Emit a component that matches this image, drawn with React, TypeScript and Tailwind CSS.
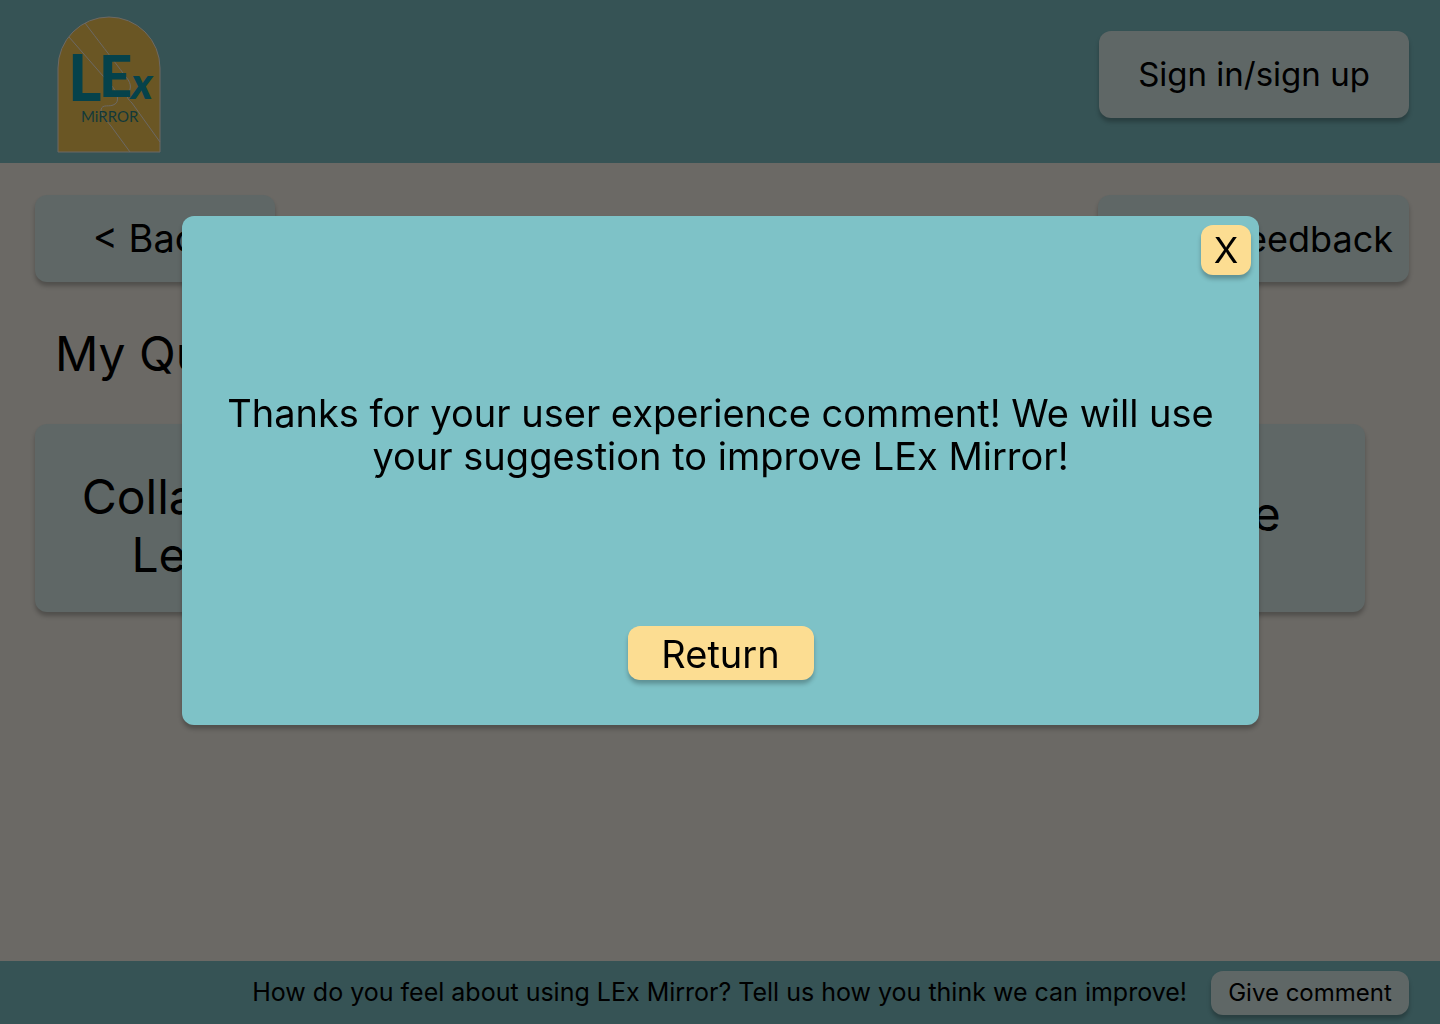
import type { ReactNode } from "react";

const raised = "rounded-xl shadow-[0_4px_4px_rgba(0,0,0,0.25)]";

function Logo() {
  return (
    <svg width="104" height="138" viewBox="0 0 104 138" role="img" aria-label="LEx Mirror">
      <path d="M1 136V52A51 51 0 0 1 103 52V136Z" fill="#6a5624" stroke="#6c6964" />
      <g fill="none" stroke="#6c6964">
        <path d="M28 7C40 23 54 41 69 61C76 69 73 74 71 78C69 81 71 83 75 87L103 126" />
        <path d="M12 21L53 68C62 77 62 86 58 88C53 92 45 87 44 94C44 99 49 104 54 110L73 136" />
      </g>
      <g fill="#05424b" fontFamily="Lato, sans-serif" fontWeight="900">
        <text x="11" y="85" fontSize="64">L</text>
        <text x="42" y="81" fontSize="58">E</text>
        <text x="74" y="83" fontSize="44" fontStyle="italic">x</text>
      </g>
      <text x="24" y="106" fontSize="15" fill="#12393a" fontFamily="Lato, sans-serif">MiRROR</text>
    </svg>
  );
}

function Card({ children, className }: { children: ReactNode; className: string }) {
  return (
    <button className={`${raised} ${className} flex h-[188px] items-center justify-center bg-[#5f6766] text-center text-5xl leading-[58px]`}>
      {children}
    </button>
  );
}

export default function App() {
  return (
    <div className="flex min-h-screen flex-col bg-[#6b6965] font-['Inter',sans-serif] text-black">
      <header className="flex items-start justify-between bg-[#365355] pt-4 pr-[31px] pb-[9px] pl-[57px]">
        <a href="#home">
          <Logo />
        </a>
        <button className={`${raised} mt-[15px] h-[87px] w-[310px] bg-[#5f6766] text-[33px]`}>Sign in/sign up</button>
      </header>

      <main className="flex-1 pt-8 pr-[31px] pl-[35px]">
        <div className="flex justify-between">
          <button className={`${raised} h-[87px] w-60 bg-[#5f6766] text-[38px]`}>&lt; Back</button>
          <button className={`${raised} h-[87px] w-[311px] bg-[#5f6766] pr-4 text-right text-4xl`}>Give feedback</button>
        </div>
        <h1 className="mt-[43px] ml-5 text-5xl leading-[58px]">My Questions</h1>
        <div className="mt-[41px] mr-11 grid grid-cols-3 gap-[77px]">
          <Card className="px-8 pt-4">Collaborative Learning</Card>
          <Card className="px-8 pb-2">Practice</Card>
          <Card className="pr-10 pb-2 pl-8">Reference</Card>
        </div>
      </main>

      <footer className="flex h-[63px] items-center justify-end gap-6 bg-[#365355] pr-[31px]">
        <p className="text-[25px]">How do you feel about using LEx Mirror? Tell us how you think we can improve!</p>
        <button className={`${raised} h-11 w-[198px] bg-[#5f6766] text-2xl`}>Give comment</button>
      </footer>

      <div className="fixed inset-0 flex items-start pt-[216px] pr-[181px] pl-[182px]">
        <div role="dialog" aria-modal="true" aria-labelledby="message" className={`${raised} flex w-full flex-col items-center bg-[#7ec2c7] px-2 pt-[9px] pb-[45px] text-[38px]`}>
          <button aria-label="Close" className={`${raised} size-[50px] self-end bg-[#fcdd92] text-4xl`}>X</button>
          <p id="message" className="mt-[117px] px-6 text-center leading-[43px]">
            Thanks for your user experience comment! We will use your suggestion to improve LEx Mirror!
          </p>
          <button className={`${raised} mt-[148px] h-[54px] w-[186px] bg-[#fcdd92]`}>Return</button>
        </div>
      </div>
    </div>
  );
}
